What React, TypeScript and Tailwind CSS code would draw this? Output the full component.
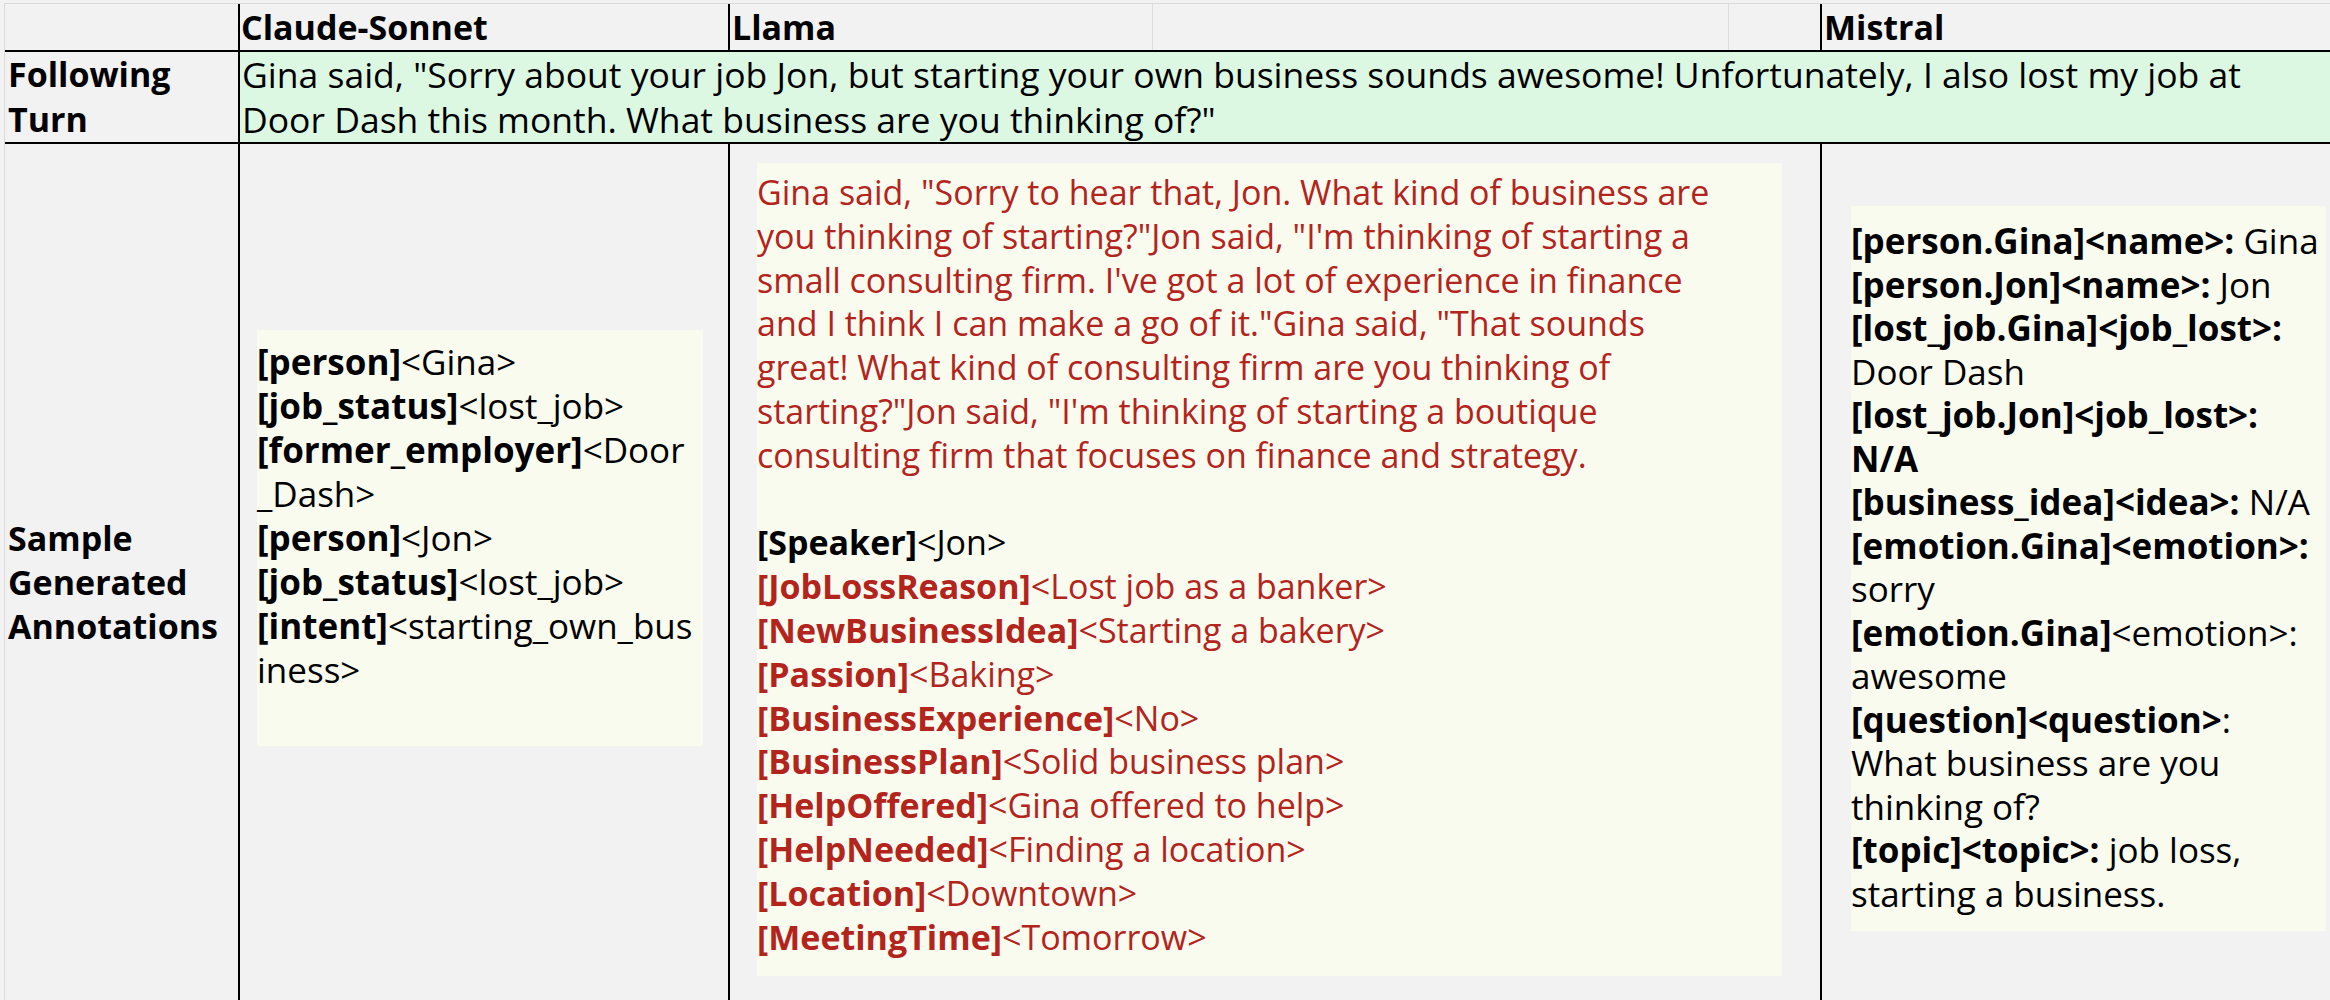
type Seg = [string, boolean?]

const claudeLines: Seg[][] = [
    [["[person]", true], ["<Gina>"]],
    [["[job_status]", true], ["<lost_job>"]],
    [["[former_employer]", true], ["<Door"]],
    [["_Dash>"]],
    [["[person]", true], ["<Jon>"]],
    [["[job_status]", true], ["<lost_job>"]],
    [["[intent]", true], ["<starting_own_bus"]],
    [["iness>"]],
]

const llamaText = [
    'Gina said, "Sorry to hear that, Jon. What kind of business are',
    'you thinking of starting?"Jon said, "I\'m thinking of starting a',
    "small consulting firm. I've got a lot of experience in finance",
    'and I think I can make a go of it."Gina said, "That sounds',
    "great! What kind of consulting firm are you thinking of",
    'starting?"Jon said, "I\'m thinking of starting a boutique',
    "consulting firm that focuses on finance and strategy.",
]

const llamaTags: [string, string][] = [
    ["[JobLossReason]", "<Lost job as a banker>"],
    ["[NewBusinessIdea]", "<Starting a bakery>"],
    ["[Passion]", "<Baking>"],
    ["[BusinessExperience]", "<No>"],
    ["[BusinessPlan]", "<Solid business plan>"],
    ["[HelpOffered]", "<Gina offered to help>"],
    ["[HelpNeeded]", "<Finding a location>"],
    ["[Location]", "<Downtown>"],
    ["[MeetingTime]", "<Tomorrow>"],
]

const mistralLines: Seg[][] = [
    [["[person.Gina]<name>:", true], [" Gina"]],
    [["[person.Jon]<name>:", true], [" Jon"]],
    [["[lost_job.Gina]<job_lost>:", true]],
    [["Door Dash"]],
    [["[lost_job.Jon]<job_lost>:", true]],
    [["N/A", true]],
    [["[business_idea]<idea>:", true], [" N/A"]],
    [["[emotion.Gina]<emotion>:", true]],
    [["sorry"]],
    [["[emotion.Gina]", true], ["<emotion>:"]],
    [["awesome"]],
    [["[question]<question>", true], [":"]],
    [["What business are you"]],
    [["thinking of?"]],
    [["[topic]<topic>:", true], [" job loss,"]],
    [["starting a business."]],
]

const Line = ({ segs }: { segs: Seg[] }) => (
    <div className="whitespace-pre">
        {segs.map(([t, bold], i) => (
            <span key={i} className={bold ? "font-bold" : ""}>
                {t}
            </span>
        ))}
    </div>
)

const App = () => {
    return (
        <div className="w-[2330px] h-[1000px] overflow-hidden bg-[#f1f2f1] pt-[3px] pl-[4px] text-black font-['Open_Sans','Noto_Sans',sans-serif] text-[34px]">
            <div className="grid grid-cols-[233px_490px_1092px_510px] border-t border-l border-[#d9dad9]">
                {/* header */}
                <div className="h-[46px]" />
                <div className="h-[46px] border-l-2 border-black pl-[1px] flex items-center font-bold leading-none">
                    Claude-Sonnet
                </div>
                <div className="h-[46px] border-l-2 border-black flex">
                    <div className="w-[422px] pl-[2px] flex items-center font-bold leading-none">Llama</div>
                    <div className="w-[576px] border-l border-[#dcdddc]" />
                    <div className="flex-1 border-l border-[#dcdddc]" />
                </div>
                <div className="h-[46px] border-l-2 border-black pl-[2px] flex items-center font-bold leading-none">
                    Mistral
                </div>

                {/* following turn */}
                <div className="border-t-2 border-black h-[92px] pl-[3px] font-bold leading-[45px]">
                    <div>Following</div>
                    <div>Turn</div>
                </div>
                <div className="col-span-3 border-t-2 border-l-2 border-black h-[92px] bg-[#dcf8e3] pl-[2px] text-[35.5px] leading-[45px]">
                    <div className="whitespace-nowrap">
                        Gina said, "Sorry about your job Jon, but starting your own business sounds awesome! Unfortunately, I also lost my job at
                    </div>
                    <div className="whitespace-nowrap">Door Dash this month. What business are you thinking of?"</div>
                </div>

                {/* sample generated annotations */}
                <div className="border-t-2 border-black h-[900px] pl-[3px] pt-[372px] font-bold leading-[44px]">
                    <div>Sample</div>
                    <div>Generated</div>
                    <div>Annotations</div>
                </div>
                <div className="border-t-2 border-l-2 border-black h-[900px] pl-[17px] pt-[186px]">
                    <div className="w-[446px] h-[416px] bg-[#f9fbef] pt-[10px] text-[35px] leading-[44px]">
                        {claudeLines.map((l, i) => (
                            <Line key={i} segs={l} />
                        ))}
                    </div>
                </div>
                <div className="border-t-2 border-l-2 border-black h-[900px] pl-[27px] pt-[19px]">
                    <div className="w-[1025px] h-[813px] bg-[#f9fbef] pt-[8px] leading-[43.8px] text-[#b3241d]">
                        {llamaText.map((t, i) => (
                            <div key={i} className="whitespace-nowrap">
                                {t}
                            </div>
                        ))}
                        <div className="h-[43.8px]" />
                        <div className="whitespace-nowrap text-black">
                            <span className="font-bold">[Speaker]</span>
                            {"<Jon>"}
                        </div>
                        {llamaTags.map(([k, v]) => (
                            <div key={k} className="whitespace-nowrap">
                                <span className="font-bold">{k}</span>
                                {v}
                            </div>
                        ))}
                    </div>
                </div>
                <div className="border-t-2 border-l-2 border-black h-[900px] pl-[29px] pt-[62px]">
                    <div className="w-[475px] h-[725px] bg-[#f9fbef] pt-[13px] text-[35px] leading-[43.5px]">
                        {mistralLines.map((l, i) => (
                            <Line key={i} segs={l} />
                        ))}
                    </div>
                </div>
            </div>
        </div>
    )
}

export default App
